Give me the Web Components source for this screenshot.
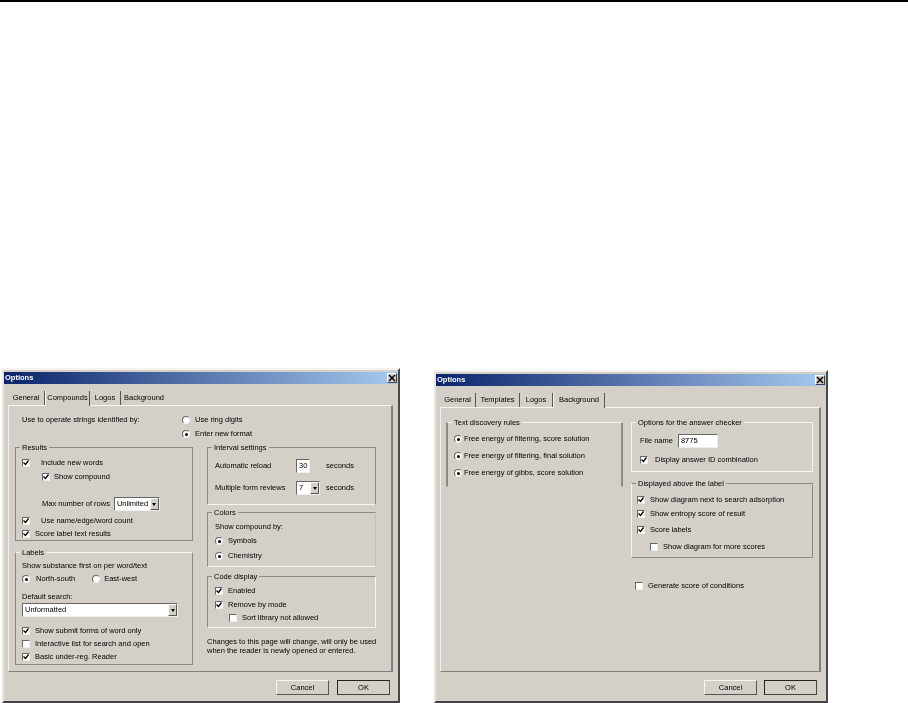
<!DOCTYPE html>
<html>
<head>
<meta charset="utf-8">
<title>Options</title>
<style>
  html, body { margin: 0; background: #fff; }
  body { width: 908px; height: 703px; overflow: hidden; position: relative; border-top: 2px solid #000; box-sizing: border-box; font: 7.5px/10px "Liberation Sans", Arial, sans-serif; color: #000; }
</style>
</head>
<body>

<options-window style="left:2px; top:366px; width:398px; height:335px; --panel-right:5px; --panel-pad:6px; --foot-right:8px; --foot-gap:8px">
  <option-tab slot="tabs" style="width:37px; margin-left:4px">General</option-tab>
  <option-tab slot="tabs" active style="width:45px">Compounds</option-tab>
  <option-tab slot="tabs" style="width:31px">Logos</option-tab>
  <option-tab slot="tabs" style="width:46px; border-right:none">Background</option-tab>

  <two-col style="--left:178px; --right:169px; --col-gap:14px; --top:41px">
    <div slot="top" style="display:flex; height:41px; box-sizing:border-box; padding:9px 0 0 7px">
      <div style="width:160px">Use to operate strings identified by:</div>
      <div style="display:flex; flex-direction:column; gap:4px">
        <option-radio>Use ring digits</option-radio>
        <option-radio on>Enter new format</option-radio>
      </div>
    </div>

    <div slot="left" style="display:flex; flex-direction:column; gap:11px">
      <option-group style="height:94px; padding-top:10px">
        <span slot="legend">Results</span>
        <option-check on style="--gap:11px">Include new words</option-check>
        <option-check on style="--gap:4px; margin:4px 0 0 20px">Show compound</option-check>
        <div style="display:flex; align-items:center; gap:4px; margin:15px 0 0 20px; height:14px">
          <span>Max number of rows</span><option-select style="width:46px">Unlimited</option-select>
        </div>
        <option-check on style="--gap:11px; margin-top:5px">Use name/edge/word count</option-check>
        <option-check on style="margin-top:3px">Score label text results</option-check>
      </option-group>

      <option-group style="height:113px; padding-top:8px; --bt:#f6f5f2">
        <span slot="legend">Labels</span>
        <div>Show substance first on per word/text</div>
        <div style="display:flex; gap:17px; margin-top:3px">
          <option-radio on style="--gap:6px">North-south</option-radio>
          <option-radio style="--gap:4px">East-west</option-radio>
        </div>
        <div style="margin-top:8px">Default search:</div>
        <option-select style="width:156px; margin-top:1px">Unformatted</option-select>
        <option-check on style="margin-top:9px">Show submit forms of word only</option-check>
        <option-check style="margin-top:3px">Interactive list for search and open</option-check>
        <option-check on style="margin-top:3px">Basic under-reg. Reader</option-check>
      </option-group>
    </div>

    <div slot="right" style="display:flex; flex-direction:column">
      <option-group style="height:58px; padding-left:7px; --bb:#f6f5f2">
        <span slot="legend">Interval settings</span>
        <div style="display:flex; align-items:center; height:14px; margin-top:2px">
          <span style="width:81px">Automatic reload</span>
          <option-input style="width:14px">30</option-input>
          <span style="margin-left:16px">seconds</span>
        </div>
        <div style="display:flex; align-items:center; height:14px; margin-top:8px">
          <span style="width:81px">Multiple form reviews</span>
          <option-select style="width:24px">7</option-select>
          <span style="margin-left:6px">seconds</span>
        </div>
      </option-group>

      <option-group style="height:55px; margin-top:7px; padding-left:7px; --bb:#f6f5f2; --br:#c4c1ba">
        <span slot="legend">Colors</span>
        <div>Show compound by:</div>
        <option-radio on style="margin-top:4px">Symbols</option-radio>
        <option-radio on style="margin-top:5px">Chemistry</option-radio>
      </option-group>

      <option-group style="height:52px; margin-top:9px; padding-left:7px; --bb:#f6f5f2; --br:#f6f5f2">
        <span slot="legend">Code display</span>
        <option-check on>Enabled</option-check>
        <option-check on style="margin-top:4px">Remove by mode</option-check>
        <option-check style="margin:3px 0 0 14px">Sort library not allowed</option-check>
      </option-group>

      <div style="margin-top:9px; line-height:9px; white-space:nowrap">Changes to this page will change, will only be used<br>when the reader is newly opened or entered.</div>
    </div>
  </two-col>

  <option-button slot="buttons">Cancel</option-button>
  <option-button slot="buttons" primary>OK</option-button>
</options-window>

<options-window style="left:434px; top:368px; width:394px; height:333px; --panel-right:5px; --panel-pad:5px; --foot-right:9px; --foot-gap:7px">
  <option-tab slot="tabs" style="width:36px; margin-left:4px">General</option-tab>
  <option-tab slot="tabs" style="width:44px">Templates</option-tab>
  <option-tab slot="tabs" style="width:33px">Logos</option-tab>
  <option-tab slot="tabs" active style="width:52px">Background</option-tab>

  <two-col style="--left:177px; --right:182px; --col-gap:8px; --top:14px">
    <div slot="left">
      <option-group style="height:65px; padding-top:11px; padding-left:6px; --gap:2px; --bt:#f6f5f2; --bb:transparent; --bw:2px">
        <span slot="legend">Text discovery rules</span>
        <option-radio on>Free energy of filtering, score solution</option-radio>
        <option-radio on style="margin-top:7px">Free energy of filtering, final solution</option-radio>
        <option-radio on style="margin-top:7px">Free energy of gibbs, score solution</option-radio>
      </option-group>
    </div>

    <div slot="right" style="display:flex; flex-direction:column">
      <option-group style="height:50px; padding-left:8px; --bt:#f6f5f2; --bl:#f6f5f2; --br:#f6f5f2; --bb:#f6f5f2">
        <span slot="legend">Options for the answer checker</span>
        <div style="display:flex; align-items:center; gap:5px; height:14px; margin-top:2px">
          <span>File name</span><option-input style="width:40px">8775</option-input>
        </div>
        <option-check on style="margin-top:7px; --gap:7px">Display answer ID combination</option-check>
      </option-group>

      <option-group style="height:75px; margin-top:11px; padding-top:11px; padding-left:5px; --bl:#f6f5f2">
        <span slot="legend">Displayed above the label</span>
        <option-check on>Show diagram next to search adsorption</option-check>
        <option-check on style="margin-top:4px">Show entropy score of result</option-check>
        <option-check on style="margin-top:6px">Score labels</option-check>
        <option-check style="margin:7px 0 0 13px">Show diagram for more scores</option-check>
      </option-group>

      <option-check style="margin:23px 0 0 4px">Generate score of conditions</option-check>
    </div>
  </two-col>

  <option-button slot="buttons">Cancel</option-button>
  <option-button slot="buttons" primary>OK</option-button>
</options-window>

<script>
// makes a custom element from its shadow markup, open mode so the texts stay readable
function defineBox(name, markup) {
  const template = document.createElement("template");
  template.innerHTML = markup;
  customElements.define(name, class extends HTMLElement {
    constructor() {
      super();
      const shadowRoot = this.attachShadow({mode: "open"});
      shadowRoot.append(template.content.cloneNode(true));
    }
  });
}

defineBox("options-window", `
<style>
  :host { position: absolute; display: flex; flex-direction: column; box-sizing: border-box; background: #d4d0c8;
    border: 2px solid #d4d0c8; border-top-color: #f4f3f0; border-left-color: #e8e6e1;
    border-right-color: #4a4a4a; border-bottom-color: #404040; filter: blur(0.4px); padding-top: 2px; }
  .title { display: flex; align-items: center; justify-content: space-between; height: 12px; padding: 0 1px 0 1px;
    background: linear-gradient(90deg, #0a246a, #a6caf0); color: #fff; font-weight: bold; }
  .close { width: 10px; height: 10px; box-sizing: border-box; background: #d4d0c8; border: 1px solid; border-color: #fff #404040 #404040 #fff; display: flex; }
  .tabs { display: flex; align-items: flex-end; height: 21px; }
  .panel { flex: 1; margin: 0 var(--panel-right) 0 4px; box-sizing: border-box; border: 1px solid; border-color: #f6f5f2 #808080 #808080 #f0efea; border-right-width: 2px; padding: 0 6px 0 var(--panel-pad); }
  .foot { display: flex; justify-content: flex-end; gap: var(--foot-gap); height: 29px; padding: 8px var(--foot-right) 0 0; box-sizing: border-box; }
</style>
<div class="title"><span>Options</span>
  <span class="close"><svg width="8" height="8" viewBox="0 0 8 8"><path d="M1 1l6 6M7 1l-6 6" stroke="#000" stroke-width="1.5"/></svg></span>
</div>
<div class="tabs"><slot name="tabs"></slot></div>
<div class="panel"><slot></slot></div>
<div class="foot"><slot name="buttons"></slot></div>`);

defineBox("option-tab", `
<style>
  :host { display: flex; align-items: center; justify-content: center; box-sizing: border-box; height: 14px; white-space: nowrap; overflow: hidden; border-right: 1px solid #555; }
  /* the open tab sits over the panel's top line */
  :host([active]) { position: relative; z-index: 1; background: #d4d0c8; border-left: 1px solid #f6f5f2; height: 15px; margin-bottom: -1px; padding-bottom: 1px; }
</style>
<slot></slot>`);

defineBox("two-col", `
<style>
  :host { display: block; }
  .top { min-height: var(--top); }
  .cols { display: grid; grid-template-columns: var(--left) var(--right); column-gap: var(--col-gap); }
</style>
<div class="top"><slot name="top"></slot></div>
<div class="cols"><slot name="left"></slot><slot name="right"></slot></div>`);

defineBox("option-group", `
<style>
  :host { display: block; position: relative; box-sizing: border-box; padding: 9px 6px 0 6px;
    border-style: solid; border-width: 1px; border-right-width: var(--bw, 1px); border-left-width: var(--bw, 1px);
    border-color: var(--bt, #8d8a83) var(--br, #8d8a83) var(--bb, #8d8a83) var(--bl, #8d8a83); }
  .legend { position: absolute; top: -5px; left: 4px; padding: 0 2px; background: #d4d0c8; white-space: nowrap; }
</style>
<div class="legend"><slot name="legend"></slot></div>
<slot></slot>`);

defineBox("option-check", `
<style>
  :host { display: flex; align-items: center; height: 10px; gap: var(--gap, 5px); white-space: nowrap; }
  .box { flex: none; width: 8px; height: 8px; box-sizing: border-box; background: #fff; border: 1px solid; border-color: #666 #eee #eee #666; display: flex; }
  svg { visibility: hidden; }
  :host([on]) svg { visibility: visible; }
</style>
<span class="box"><svg width="6" height="6" viewBox="0 0 6 6"><path d="M.5 2.5l2 2 3-4" fill="none" stroke="#000" stroke-width="1.3"/></svg></span>
<span><slot></slot></span>`);

defineBox("option-radio", `
<style>
  :host { display: flex; align-items: center; height: 10px; gap: var(--gap, 5px); white-space: nowrap; }
  .dot { flex: none; width: 8px; height: 8px; box-sizing: border-box; border-radius: 50%; background: #fff; border: 1px solid; border-color: #666 #eee #eee #666; display: flex; align-items: center; justify-content: center; }
  .dot i { width: 3px; height: 3px; border-radius: 50%; background: #000; display: none; }
  :host([on]) .dot i { display: block; }
</style>
<span class="dot"><i></i></span>
<span><slot></slot></span>`);

defineBox("option-select", `
<style>
  :host { display: flex; box-sizing: border-box; height: 14px; background: #fff; border: 1px solid; border-color: #666 #eee #eee #666; }
  .val { flex: 1; padding-left: 2px; line-height: 12px; white-space: nowrap; overflow: hidden; }
  .arrow { flex: none; width: 9px; background: #d4d0c8; border: 1px solid; border-color: #fff #555 #555 #fff; box-sizing: border-box; display: flex; align-items: center; justify-content: center; }
  .arrow i { width: 0; height: 0; border: 2px solid transparent; border-top: 3px solid #000; border-bottom: 0; }
</style>
<span class="val"><slot></slot></span><span class="arrow"><i></i></span>`);

defineBox("option-input", `
<style>
  :host { display: block; box-sizing: border-box; height: 14px; background: #fff; border: 1px solid; border-color: #666 #eee #eee #666; padding-left: 2px; line-height: 12px; overflow: hidden; }
</style>
<slot></slot>`);

defineBox("option-button", `
<style>
  :host { display: flex; align-items: center; justify-content: center; box-sizing: border-box; width: 53px; height: 15px; background: #d4d0c8; border: 1px solid; border-color: #f6f5f2 #555 #555 #f6f5f2; }
  :host([primary]) { border-color: #222 #444 #444 #222; }
</style>
<slot></slot>`);
</script>
</body>
</html>
